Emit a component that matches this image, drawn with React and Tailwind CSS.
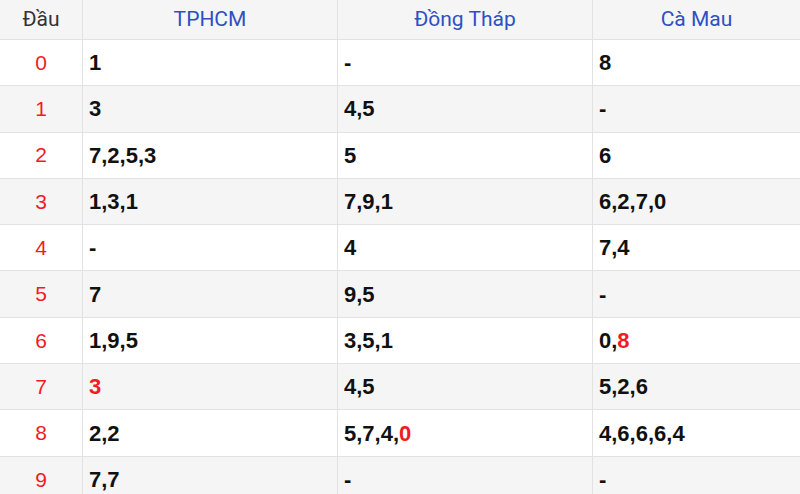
import React from 'react';

const rows = [
  { d: '0', a: ['1'], b: ['-'], c: ['8'] },
  { d: '1', a: ['3'], b: ['4,5'], c: ['-'] },
  { d: '2', a: ['7,2,5,3'], b: ['5'], c: ['6'] },
  { d: '3', a: ['1,3,1'], b: ['7,9,1'], c: ['6,2,7,0'] },
  { d: '4', a: ['-'], b: ['4'], c: ['7,4'] },
  { d: '5', a: ['7'], b: ['9,5'], c: ['-'] },
  { d: '6', a: ['1,9,5'], b: ['3,5,1'], c: ['0,', { red: '8' }] },
  { d: '7', a: [{ red: '3' }], b: ['4,5'], c: ['5,2,6'] },
  { d: '8', a: ['2,2'], b: ['5,7,4,', { red: '0' }], c: ['4,6,6,6,4'] },
  { d: '9', a: ['7,7'], b: ['-'], c: ['-'] },
];

const Cell = ({ parts }) => (
  <td className="border border-[#e2e2e2] pl-[6px] font-bold text-[22px] text-[#111]">
    {parts.map((p, i) =>
      typeof p === 'string' ? (
        <span key={i}>{p}</span>
      ) : (
        <span key={i} className="text-[#f01c22]">{p.red}</span>
      )
    )}
  </td>
);

export default function App() {
  return (
    <div className="w-[800px] h-[494px] overflow-hidden bg-white font-['Liberation_Sans',Arial,sans-serif]">
      <table className="border-collapse table-fixed w-[802px] -ml-px -mt-px">
        <colgroup>
          <col className="w-[83px]" />
          <col className="w-[255px]" />
          <col className="w-[255px]" />
          <col />
        </colgroup>
        <thead>
          <tr className="h-[40px] bg-[#f5f5f5] font-['Roboto',sans-serif] text-[21px] font-normal">
            <th className="border border-[#e2e2e2] font-normal text-[#333]">Đầu</th>
            <th className="border border-[#e2e2e2] font-normal text-[#2f4fc4]">TPHCM</th>
            <th className="border border-[#e2e2e2] font-normal text-[#2f4fc4]">Đồng Tháp</th>
            <th className="border border-[#e2e2e2] font-normal text-[#2f4fc4]">Cà Mau</th>
          </tr>
        </thead>
        <tbody>
          {rows.map((r, i) => (
            <tr key={r.d} className={`h-[46.3px] ${i % 2 === 1 ? 'bg-[#f5f5f5]' : 'bg-white'}`}>
              <td className="border border-[#e2e2e2] text-center text-[21px] text-[#f01c22]">{r.d}</td>
              <Cell parts={r.a} />
              <Cell parts={r.b} />
              <Cell parts={r.c} />
            </tr>
          ))}
        </tbody>
      </table>
    </div>
  );
}
